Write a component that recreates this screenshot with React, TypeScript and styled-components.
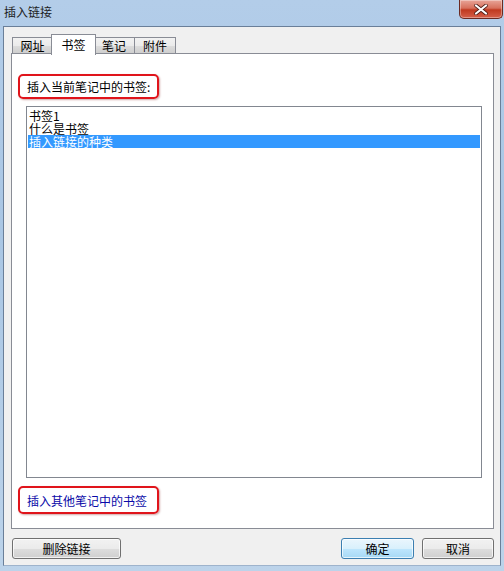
import { FC } from 'react';
import styled, { createGlobalStyle } from 'styled-components';

const GlobalStyle = createGlobalStyle`
	html, body {
		margin: 0;
		padding: 0;
		background: #b7cfe8;
	}
	* {
		box-sizing: border-box;
	}
`;

const font = `"Noto Sans CJK SC", "Liberation Sans", sans-serif`;

const Window = styled.div`
	display: flex;
	flex-direction: column;
	width: 504px;
	height: 571px;
	background: linear-gradient(180deg, #b3cde9 0%, #a9c6e4 40%, #bcd3ea 100%);
	font-family: ${font};
	font-size: 12px;
	overflow: hidden;
`;

const TitleBar = styled.div`
	display: flex;
	align-items: flex-start;
	justify-content: space-between;
	height: 26px;
	padding-left: 4px;
`;

const Title = styled.span`
	margin-top: 4px;
	color: #1e1e1e;
	font-size: 12px;
	line-height: 16px;
`;

const CloseButton = styled.div`
	display: flex;
	align-items: center;
	justify-content: center;
	width: 44px;
	height: 19px;
	margin-right: 1px;
	border: 1px solid #6b2a22;
	border-top: none;
	border-radius: 0 0 5px 5px;
	background: linear-gradient(180deg, #e8a598 0%, #d7705c 45%, #c0391f 55%, #d5604a 100%);
	box-shadow: inset 0 0 0 1px rgba(255, 255, 255, 0.35);
`;

const Body = styled.div`
	display: flex;
	flex-direction: column;
	flex: 1;
	margin: 0 3px 5px 3px;
	padding: 7px 6px 0 7px;
	background: #f0f0f0;
	border: 1px solid #6a7f99;
	border-bottom-color: #9eb3cc;
`;

const TabStrip = styled.div`
	display: flex;
	align-items: flex-end;
	height: 20px;
	padding-left: 1px;
	position: relative;
	z-index: 1;
`;

const Tab = styled.div<{ active?: boolean }>`
	display: flex;
	align-items: center;
	justify-content: center;
	width: ${({ active }) => (active ? '45px' : '41px')};
	height: ${({ active }) => (active ? '21px' : '17px')};
	margin: ${({ active }) => (active ? '0 -2px -1px -2px' : '0')};
	padding-top: ${({ active }) => (active ? '0' : '1px')};
	border: 1px solid #898c95;
	border-bottom: ${({ active }) => (active ? 'none' : '1px solid #898c95')};
	border-left-width: ${({ active }) => (active ? '1px' : '0')};
	background: ${({ active }) =>
		active ? '#ffffff' : 'linear-gradient(180deg, #f2f2f2 0%, #ebebeb 50%, #dddddd 51%, #cfcfcf 100%)'};
	color: #000;
	font-size: 12px;
	line-height: 14px;
	position: relative;
	z-index: ${({ active }) => (active ? 2 : 1)};

	&:first-child {
		border-left-width: 1px;
	}
`;

const TabPanel = styled.div`
	display: flex;
	flex-direction: column;
	height: 476px;
	margin-top: -1px;
	padding: 20px 11px 0 6px;
	background: #ffffff;
	border: 1px solid #898c95;
`;

const Callout = styled.div`
	display: flex;
	align-items: center;
	width: 141px;
	height: 25px;
	padding-left: 7px;
	border: 2px solid #e0141b;
	border-radius: 5px;
	box-shadow: 1px 1px 2px rgba(120, 0, 0, 0.35);
	font-size: 12px;
`;

const CalloutText = styled.span<{ link?: boolean }>`
	color: ${({ link }) => (link ? '#0a0aa8' : '#000000')};
	white-space: nowrap;
`;

const ListBox = styled.div`
	display: flex;
	flex-direction: column;
	height: 372px;
	margin: 7px 0 8px 8px;
	padding: 1px;
	border: 1px solid #828790;
	background: #ffffff;
`;

const ListItem = styled.div<{ selected?: boolean }>`
	height: 13px;
	padding-left: 1px;
	margin-top: 0;
	background: ${({ selected }) => (selected ? '#3399ff' : 'transparent')};
	color: ${({ selected }) => (selected ? '#ffffff' : '#000000')};
	font-size: 12px;
	line-height: 13px;
	white-space: nowrap;

	&:first-child {
		margin-top: 1px;
	}
`;

const ButtonRow = styled.div`
	display: flex;
	align-items: center;
	height: 21px;
	margin-top: 9px;
	padding-left: 1px;
`;

const Spacer = styled.div`
	flex: 1;
`;

const Button = styled.div<{ width: number; primary?: boolean }>`
	display: flex;
	align-items: center;
	justify-content: center;
	width: ${({ width }) => width}px;
	height: 21px;
	margin-left: ${({ primary }) => (primary ? '0' : '8px')};
	border: 1px solid ${({ primary }) => (primary ? '#3c7fb1' : '#707070')};
	border-radius: 3px;
	background: ${({ primary }) =>
		primary
			? 'linear-gradient(180deg, #eaf6fd 0%, #d9f0fc 50%, #bee6fd 51%, #a7d9f5 100%)'
			: 'linear-gradient(180deg, #f2f2f2 0%, #ebebeb 50%, #dddddd 51%, #cfcfcf 100%)'};
	box-shadow: inset 0 0 0 1px rgba(255, 255, 255, 0.7);
	color: #000;
	font-size: 12px;
`;

const FirstButton = styled(Button)`
	margin-left: 0;
`;

const tabs = ['网址', '书签', '笔记', '附件'];
const bookmarks = ['书签1', '什么是书签', '插入链接的种类'];

const App: FC = () => {
	return (
		<>
			<GlobalStyle />
			<Window>
				<TitleBar>
					<Title>插入链接</Title>
					<CloseButton>
						<svg width="14" height="11" viewBox="0 0 14 11">
							<path
								d="M2 1.5 L12 9.5 M12 1.5 L2 9.5"
								stroke="#4a1a14"
								strokeWidth="3.6"
								strokeLinecap="round"
							/>
							<path
								d="M2 1.5 L12 9.5 M12 1.5 L2 9.5"
								stroke="#ffffff"
								strokeWidth="2.2"
								strokeLinecap="round"
							/>
						</svg>
					</CloseButton>
				</TitleBar>
				<Body>
					<TabStrip>
						{tabs.map((t) => (
							<Tab key={t} active={t === '书签'}>
								{t}
							</Tab>
						))}
					</TabStrip>
					<TabPanel>
						<Callout>
							<CalloutText>插入当前笔记中的书签:</CalloutText>
						</Callout>
						<ListBox>
							{bookmarks.map((b, i) => (
								<ListItem key={b} selected={i === 2}>
									{b}
								</ListItem>
							))}
						</ListBox>
						<Callout style={{ height: 28 }}>
							<CalloutText link>插入其他笔记中的书签</CalloutText>
						</Callout>
					</TabPanel>
					<ButtonRow>
						<FirstButton width={109}>删除链接</FirstButton>
						<Spacer />
						<Button width={73} primary>
							确定
						</Button>
						<Button width={72}>取消</Button>
					</ButtonRow>
				</Body>
			</Window>
		</>
	);
};

export default App;
